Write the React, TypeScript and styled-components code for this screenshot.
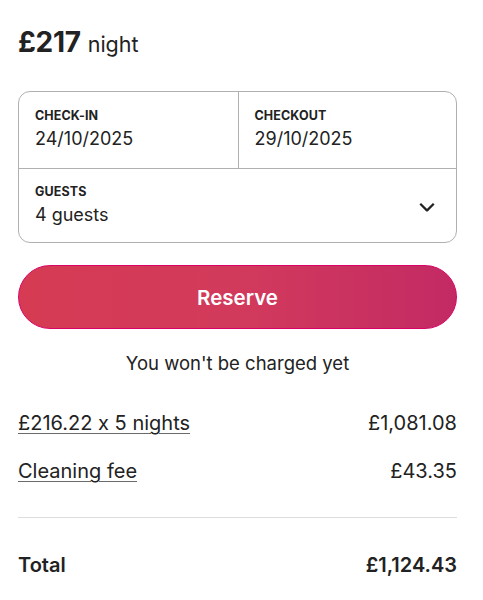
import styled, { createGlobalStyle } from "styled-components";

const GlobalStyle = createGlobalStyle`
  html, body {
    margin: 0;
    padding: 0;
    background: #ffffff;
  }
  body {
    font-family: Inter, "Liberation Sans", Arial, sans-serif;
    font-feature-settings: "calt" 0;
    color: #222222;
  }
`;

const Card = styled.div`
  width: 439px;
  padding: 0 18px;
  display: flex;
  flex-direction: column;
`;

const PriceLine = styled.div`
  display: flex;
  align-items: baseline;
  gap: 7px;
  padding-top: 25px;
  height: 65px;
  box-sizing: border-box;
`;

const Price = styled.span`
  font-size: 28px;
  font-weight: 700;
  letter-spacing: -0.3px;
`;

const PriceUnit = styled.span`
  font-size: 21.5px;
  font-weight: 400;
`;

const Picker = styled.div`
  margin-top: 26px;
  border: 1px solid #b0b0b0;
  border-radius: 12px;
  display: grid;
  grid-template-columns: 1fr 1fr;
  overflow: hidden;
`;

const Field = styled.div<{ $full?: boolean; $divider?: boolean }>`
  grid-column: ${(p) => (p.$full ? "1 / span 2" : "auto")};
  border-top: ${(p) => (p.$full ? "1px solid #b0b0b0" : "none")};
  border-left: ${(p) => (p.$divider ? "1px solid #b0b0b0" : "none")};
  height: ${(p) => (p.$full ? "74px" : "76px")};
  box-sizing: border-box;
  padding: ${(p) => (p.$full ? "15px 16px 0" : "16px 16px 0")};
  display: flex;
  align-items: center;
  justify-content: space-between;
`;

const FieldText = styled.div`
  display: flex;
  flex-direction: column;
  align-self: flex-start;
`;

const Label = styled.span`
  font-size: 12.5px;
  font-weight: 700;
  line-height: 16px;
  letter-spacing: 0.1px;
`;

const Value = styled.span`
  font-size: 18px;
  line-height: 26px;
  margin-top: 2px;
`;

const Chevron = styled.svg`
  width: 18px;
  height: 18px;
  margin-right: 4px;
  margin-top: -14px;
`;

const ReserveButton = styled.button`
  margin-top: 22px;
  height: 64px;
  border-radius: 32px;
  border: 1px solid #d70466;
  background: linear-gradient(90deg, #d63b53 0%, #d23a5c 50%, #c32a64 100%);
  color: #ffffff;
  font-family: inherit;
  font-size: 20.5px;
  font-weight: 600;
  cursor: pointer;
`;

const Note = styled.p`
  margin: 22px 0 0;
  text-align: center;
  font-size: 18.5px;
  line-height: 24px;
`;

const Lines = styled.div`
  margin-top: 34px;
  display: flex;
  flex-direction: column;
  gap: 20px;
  padding-bottom: 32px;
  border-bottom: 1px solid #dddddd;
`;

const Line = styled.div<{ $strong?: boolean }>`
  display: flex;
  justify-content: space-between;
  align-items: center;
  font-size: 20px;
  line-height: 28px;
  font-weight: ${(p) => (p.$strong ? 600 : 400)};
`;

const Underlined = styled.span`
  text-decoration: underline;
  text-decoration-color: #6a6a6a;
  text-underline-offset: 3px;
  text-decoration-thickness: 1px;
`;

const TotalLine = styled(Line)`
  margin-top: 33px;
`;

export default function App() {
  return (
    <>
      <GlobalStyle />
      <Card>
        <PriceLine>
          <Price>£217</Price>
          <PriceUnit>night</PriceUnit>
        </PriceLine>

        <Picker>
          <Field>
            <FieldText>
              <Label>CHECK-IN</Label>
              <Value>24/10/2025</Value>
            </FieldText>
          </Field>
          <Field $divider>
            <FieldText>
              <Label>CHECKOUT</Label>
              <Value>29/10/2025</Value>
            </FieldText>
          </Field>
          <Field $full>
            <FieldText>
              <Label>GUESTS</Label>
              <Value>4 guests</Value>
            </FieldText>
            <Chevron viewBox="0 0 32 32" fill="none" stroke="#222222" strokeWidth="4">
              <path d="M28 12 16.7 23.3a1 1 0 0 1-1.4 0L4 12" />
            </Chevron>
          </Field>
        </Picker>

        <ReserveButton>Reserve</ReserveButton>
        <Note>You won't be charged yet</Note>

        <Lines>
          <Line>
            <Underlined>£216.22 x 5 nights</Underlined>
            <span>£1,081.08</span>
          </Line>
          <Line>
            <Underlined>Cleaning fee</Underlined>
            <span>£43.35</span>
          </Line>
        </Lines>

        <TotalLine $strong>
          <span>Total</span>
          <span>£1,124.43</span>
        </TotalLine>
      </Card>
    </>
  );
}
